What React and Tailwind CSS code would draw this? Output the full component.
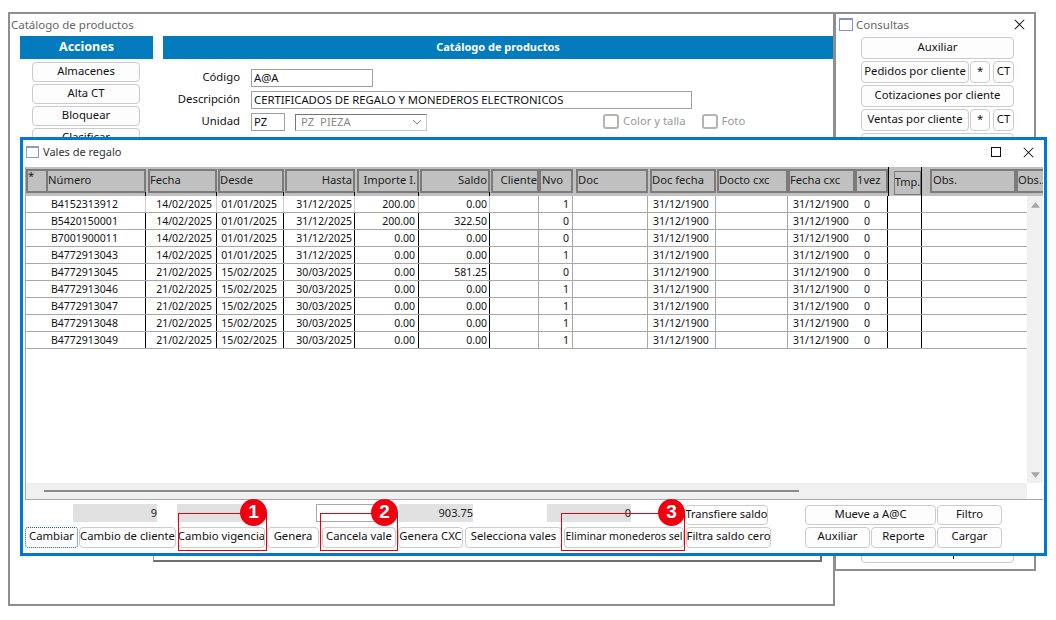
const COLS = 'grid-cols-[20px_100px_71px_67px_71px_64px_71px_49px_34px_75px_68px_72px_67px_33px_34px_94px_28px]';
const FONT = "font-['Noto_Sans',sans-serif]";

const HEADERS = [
  { label: '*', cell: 'border-r-0', text: 'pb-[10px]' },
  { label: 'Número', tick: true },
  { label: 'Fecha', wrap: 'pl-[2px]', tick: true },
  { label: 'Desde', wrap: 'pl-[1px]', tick: true },
  { label: 'Hasta', wrap: 'pl-[1px]', text: 'justify-end pr-[1px]', tick: true },
  { label: 'Importe I.', wrap: 'pl-[2px]', text: 'justify-end pr-[1px]', tick: true },
  { label: 'Saldo', wrap: 'pl-[1px]', text: 'justify-end pr-[1px]', tick: true },
  { label: 'Cliente', wrap: 'pl-[1px]', text: 'justify-end' },
  { label: 'Nvo', text: 'pl-[1px]' },
  { label: 'Doc', wrap: 'pl-[3px]' },
  { label: 'Doc fecha', wrap: 'pl-[2px]' },
  { label: 'Docto cxc', wrap: 'pl-[1px]' },
  { label: 'Fecha cxc' },
  { label: '1vez' },
  { label: 'Tmp.', tmp: true },
  { label: 'Obs.', wrap: 'pl-[8px]', text: 'pl-[1px]' },
  { label: 'Obs.2', cell: 'border-r-0' },
];

const ROWS = [
  ['B4152313912', '14/02/2025', '01/01/2025', '31/12/2025', '200.00', '0.00', '1'],
  ['B5420150001', '14/02/2025', '01/01/2025', '31/12/2025', '200.00', '322.50', '0'],
  ['B7001900011', '14/02/2025', '01/01/2025', '31/12/2025', '0.00', '0.00', '0'],
  ['B4772913043', '14/02/2025', '01/01/2025', '31/12/2025', '0.00', '0.00', '1'],
  ['B4772913045', '21/02/2025', '15/02/2025', '30/03/2025', '0.00', '581.25', '0'],
  ['B4772913046', '21/02/2025', '15/02/2025', '30/03/2025', '0.00', '0.00', '1'],
  ['B4772913047', '21/02/2025', '15/02/2025', '30/03/2025', '0.00', '0.00', '1'],
  ['B4772913048', '21/02/2025', '15/02/2025', '30/03/2025', '0.00', '0.00', '1'],
  ['B4772913049', '21/02/2025', '15/02/2025', '30/03/2025', '0.00', '0.00', '1'],
];

const CloseIcon = ({ className = '' }) => (
  <svg viewBox="0 0 12 12" className={className} fill="none" stroke="#111" strokeWidth="1.1">
    <path d="M0.8 0.8 L11.2 11.2 M11.2 0.8 L0.8 11.2" />
  </svg>
);

const Btn = ({ children, className = '', size = 'text-[11.3px]' }) => (
  <button
    type="button"
    className={`flex items-center justify-center overflow-hidden whitespace-nowrap rounded-[4px] border border-[#cbcbcb] bg-[#fdfdfd] pb-[2px] text-[#111] ${size} ${className}`}
  >
    {children}
  </button>
);

const WinIcon = ({ className = '' }) => (
  <div className={`shrink-0 border border-[#7d93c9] border-t-2 bg-white ${className}`} />
);

const Cell = ({ children, className = '' }) => (
  <div className={`flex h-[16px] items-center overflow-hidden whitespace-nowrap border-r pt-[2px] ${className}`}>{children}</div>
);

const Row = ({ row, first }) => {
  const strong = first ? 'border-[#cdcdcd]' : 'border-black';
  return (
    <div className={`grid h-[17px] w-[1001px] overflow-hidden border-b border-[#a8a8a8] text-[10.5px] text-[#111] ${COLS}`}>
      <Cell className="border-r-0" />
      <Cell className={`pl-[5px] ${strong}`}>{row[0]}</Cell>
      <Cell className={`justify-end pr-[4px] ${strong}`}>{row[1]}</Cell>
      <Cell className={`justify-end pr-[6px] ${strong}`}>{row[2]}</Cell>
      <Cell className={`justify-end pr-[2px] ${strong}`}>{row[3]}</Cell>
      <Cell className={`justify-end pr-[3px] ${strong}`}>{row[4]}</Cell>
      <Cell className={`justify-end pr-[2px] ${strong}`}>{row[5]}</Cell>
      <Cell className="border-[#a8a8a8]" />
      <Cell className="justify-end pr-[3px] border-[#a8a8a8]">{row[6]}</Cell>
      <Cell className="border-[#a8a8a8]" />
      <Cell className="pl-[5px] border-[#a8a8a8]">31/12/1900</Cell>
      <Cell className="border-[#a8a8a8]" />
      <Cell className="pl-[5px] border-r-0">31/12/1900</Cell>
      <Cell className="pl-[9px] border-black">0</Cell>
      <Cell className="border-black" />
      <Cell className="border-r-0" />
    </div>
  );
};

const HeaderCell = ({ h }) => (
  <div className={`relative h-full overflow-hidden py-[2px] ${h.wrap || ''} ${h.tmp ? 'border-x border-black pl-[5px] pt-[4px]' : ''}`}>
    <div
      className={`flex h-[24px] items-center overflow-hidden whitespace-nowrap bg-[#c0c0c0] pb-[2px] text-[11.2px] text-[#222] ${h.tmp ? 'justify-center border border-[#7b7b7b] text-[11px]' : 'border-2 border-[#7b7b7b]'} ${h.cell || ''} ${h.text || ''}`}
    >
      {h.label}
    </div>
    {h.tick && <span className="absolute right-0 bottom-0 h-[4px] w-[1px] bg-black" />}
  </div>
);

const Marker = ({ n, box, badge }) => (
  <>
    <div className={`absolute border border-[#e3000f] ${box}`} />
    <div className={`absolute flex h-[27px] w-[27px] items-center justify-center rounded-full bg-[#f0000f] font-['Liberation_Sans',sans-serif] text-[19px] font-bold text-white ${badge}`}>
      {n}
    </div>
  </>
);

const Field = ({ children, className = '' }) => (
  <div className={`flex h-[18px] shrink-0 items-center justify-end bg-[#e1e1e1] text-[11px] text-[#222] ${className}`}>{children}</div>
);

const Catalogo = () => (
  <div className="absolute left-[8px] top-[12px] h-[594px] w-[827px] border-2 border-[#8e8e8e] bg-white">
    <div className="flex h-[22px] items-center pl-[1px] text-[11.5px] text-[#666]">Catálogo de productos</div>
    <div className="flex">
      <div className="ml-[10px] w-[133px] shrink-0">
        <div className="flex h-[23px] items-center justify-center bg-[#047bbd] text-[12.5px] font-bold text-white">Acciones</div>
        <div className="ml-[12px] mt-[3px] flex w-[108px] flex-col gap-[2px]">
          <Btn className="h-[20px]">Almacenes</Btn>
          <Btn className="h-[20px]">Alta CT</Btn>
          <Btn className="h-[20px]">Bloquear</Btn>
          <Btn className="h-[20px]">Clasificar</Btn>
        </div>
      </div>
      <div className="w-[680px]">
        <div className="ml-[10px] flex h-[23px] items-center justify-center bg-[#047bbd] pb-[1px] text-[11px] font-bold text-white">Catálogo de productos</div>
        <div className="mt-[10px] flex flex-col gap-[4px] text-[11.3px] text-[#111]">
          <div className="flex h-[18px] items-center">
            <span className="w-[87px] pb-[2px] text-right">Código</span>
            <div className="ml-[11px] flex h-[18px] w-[122px] items-center border border-[#a0a0a0] pl-[2px]">A@A</div>
          </div>
          <div className="flex h-[18px] items-center">
            <span className="w-[87px] pb-[2px] text-right">Descripción</span>
            <div className="ml-[11px] flex h-[18px] w-[441px] items-center border border-[#a0a0a0] pl-[2px]">CERTIFICADOS DE REGALO Y MONEDEROS ELECTRONICOS</div>
          </div>
          <div className="flex h-[18px] items-center">
            <span className="w-[87px] pb-[2px] text-right">Unidad</span>
            <div className="ml-[11px] flex h-[18px] w-[34px] items-center border border-[#a0a0a0] pl-[2px]">PZ</div>
            <div className="ml-[10px] flex h-[17px] w-[132px] items-center justify-between border border-[#c8c8c8] border-l-[#777] border-t-[#777] pl-[5px] pr-[4px] text-[#8a8a8a]">
              <span className="whitespace-pre">PZ  PIEZA</span>
              <svg viewBox="0 0 10 6" className="h-[6px] w-[10px]" fill="none" stroke="#8a8a8a" strokeWidth="1"><path d="M1 1 L5 5 L9 1" /></svg>
            </div>
            <div className="mb-[2px] ml-[176px] h-[15px] w-[16px] rounded-[3px] border-2 border-[#b4b4b4]" />
            <span className="ml-[4px] pb-[2px] text-[#9a9a9a]">Color y talla</span>
            <div className="mb-[2px] ml-[16px] h-[15px] w-[16px] rounded-[3px] border-2 border-[#b4b4b4]" />
            <span className="ml-[4px] pb-[2px] text-[#9a9a9a]">Foto</span>
          </div>
        </div>
        <div className="mt-[9px] h-[422px] w-[669px] border-2 border-l border-[#6f6f6f] border-l-[#9a9a9a]" />
      </div>
    </div>
  </div>
);

const Consultas = () => (
  <div className="absolute left-[834px] top-[12px] h-[559px] w-[202px] border-2 border-[#8e8e8e] bg-white">
    <div className="flex h-[23px] items-center pb-[2px] pl-[3px]">
      <WinIcon className="h-[13px] w-[14px]" />
      <span className="ml-[3px] text-[11.5px] text-[#666]">Consultas</span>
      <CloseIcon className="ml-auto mr-[9px] h-[11px] w-[11px]" />
    </div>
    <div className="ml-[25px] flex w-[153px] flex-col gap-[2px]">
      <Btn className="h-[22px]">Auxiliar</Btn>
      <div className="flex h-[22px] gap-[1px]">
        <Btn className="w-[108px]">Pedidos por cliente</Btn>
        <Btn className="w-[20px]">*</Btn>
        <Btn className="ml-[2px] w-[21px]">CT</Btn>
      </div>
      <Btn className="h-[22px]">Cotizaciones por cliente</Btn>
      <div className="flex h-[22px] gap-[1px]">
        <Btn className="w-[108px]">Ventas por cliente</Btn>
        <Btn className="w-[20px]">*</Btn>
        <Btn className="ml-[2px] w-[21px]">CT</Btn>
      </div>
      <Btn className="h-[22px]" />
      <Btn className="relative mt-[382px] h-[24px]">
        <span className="absolute bottom-[3px] left-[91px] h-[8px] w-[1px] bg-[#111]" />
      </Btn>
    </div>
  </div>
);

const Vales = () => (
  <div className="absolute left-[20px] top-[137px] h-[419px] w-[1027px] border-[3px] border-[#0078d7] bg-white">
    <div className="flex h-[27px] items-center pb-[3px] pl-[3px] text-[11px] text-[#333]">
      <WinIcon className="h-[12px] w-[13px] border-[#8a9bc4]" />
      <span className="ml-[4px]">Vales de regalo</span>
      <div className="ml-auto mr-[22px] h-[10px] w-[10px] border border-[#111]" />
      <CloseIcon className="mr-[10px] h-[11px] w-[11px]" />
    </div>

    <div className="ml-[2px] w-[1018px] border-b border-l border-[#a8a8a8]">
      <div className={`grid h-[29px] overflow-hidden bg-[#c0c0c0] ${COLS}`}>
        {HEADERS.map((h) => (
          <HeaderCell key={h.label} h={h} />
        ))}
      </div>
      <div className="flex h-[287px]">
        <div className="w-[1001px]">
          {ROWS.map((row, i) => (
            <Row key={row[0]} row={row} first={i === 0} />
          ))}
        </div>
        <div className="flex w-[17px] flex-col items-center justify-between bg-[#f0f0f0] pb-[5px] pt-[6px]">
          <svg viewBox="0 0 10 6" className="h-[6px] w-[9px]"><path d="M5 0 L10 6 L0 6 Z" fill="#a6a6a6" /></svg>
          <svg viewBox="0 0 10 6" className="h-[6px] w-[9px]"><path d="M0 0 L10 0 L5 6 Z" fill="#a6a6a6" /></svg>
        </div>
      </div>
      <div className="flex h-[16px] w-[1001px] items-center bg-[#f0f0f0] pl-[18px]">
        <div className="h-[2px] w-[755px] bg-[#8a8a8a]" />
      </div>
    </div>

    <div className="mt-[4px] flex h-[21px] items-start">
      <Field className="ml-[50px] w-[84px]">9</Field>
      <Field className="ml-[20px] w-[77px]" />
      <div className="ml-[62px] h-[18px] w-[68px] shrink-0 border border-[#a8a8a8]" />
      <Field className="ml-[15px] w-[74px]">903.75</Field>
      <Field className="ml-[74px] w-[84px]">0</Field>
      <Btn className="ml-[54px] mt-[1px] h-[20px] w-[83px]" size="text-[11px]">Transfiere saldo</Btn>
      <Btn className="ml-[37px] mt-[1px] h-[20px] w-[131px]">Mueve a A@C</Btn>
      <Btn className="ml-[1px] mt-[1px] h-[20px] w-[65px]">Filtro</Btn>
    </div>
    <div className="mt-[2px] flex h-[21px] items-start pl-[2px]">
      <button type="button" className="flex h-[21px] w-[53px] items-center justify-center rounded-[3px] border border-dotted border-[#1a5fa8] bg-[#fdfdfd] pb-[2px] text-[11.3px] text-[#111]">Cambiar</button>
      <Btn className="ml-[1px] h-[21px] w-[97px]">Cambio de cliente</Btn>
      <Btn className="ml-[2px] h-[21px] w-[87px]">Cambio vigencia</Btn>
      <Btn className="ml-[2px] h-[21px] w-[52px]">Genera</Btn>
      <Btn className="ml-[3px] h-[21px] w-[74px]">Cancela vale</Btn>
      <Btn className="ml-[2px] h-[21px] w-[65px]">Genera CXC</Btn>
      <Btn className="ml-[2px] h-[21px] w-[97px]">Selecciona vales</Btn>
      <Btn className="ml-[2px] h-[21px] w-[120px]" size="text-[10.6px]">Eliminar monederos sel</Btn>
      <Btn className="ml-[2px] h-[21px] w-[85px]">Filtra saldo cero</Btn>
      <Btn className="ml-[34px] h-[21px] w-[65px]">Auxiliar</Btn>
      <Btn className="ml-[1px] h-[21px] w-[65px]">Reporte</Btn>
      <Btn className="ml-[1px] h-[21px] w-[65px]">Cargar</Btn>
    </div>

    <Marker n="1" box="left-[155px] top-[373px] h-[38px] w-[89px]" badge="left-[217px] top-[359px]" />
    <Marker n="2" box="left-[297px] top-[373px] h-[38px] w-[78px]" badge="left-[348px] top-[359px]" />
    <Marker n="3" box="left-[538px] top-[373px] h-[38px] w-[124px]" badge="left-[635px] top-[359px]" />
  </div>
);

export default function App() {
  return (
    <div className={`relative h-[620px] w-[1056px] overflow-hidden bg-white ${FONT}`}>
      <Catalogo />
      <Consultas />
      <Vales />
    </div>
  );
}
